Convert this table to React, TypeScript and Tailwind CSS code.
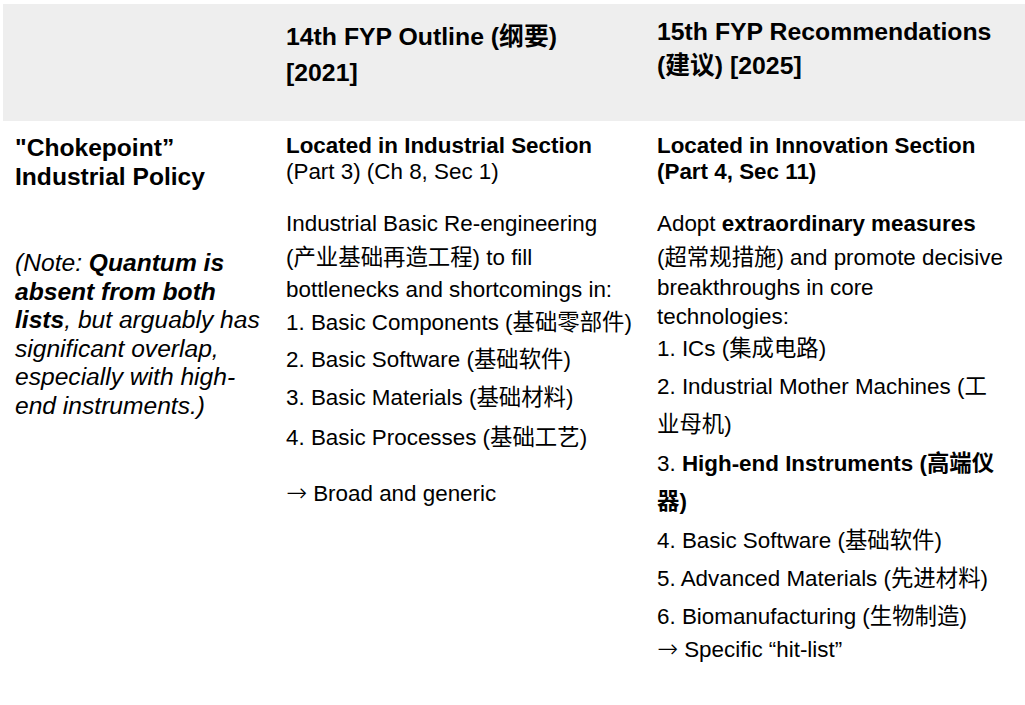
import React from 'react';

const font = { fontFamily: '"Liberation Sans", "Noto Sans CJK SC", sans-serif' };

const Line = ({ cls, children }: { cls: string; children: React.ReactNode }) => (
  <div className={`whitespace-nowrap ${cls}`}>{children}</div>
);

const Arrow = () => (
  <span className="font-['DejaVu_Sans'] text-[25px] leading-none font-light">→</span>
);

export default function App() {
  return (
    <div className="w-[1025px] h-[705px] bg-white text-black overflow-hidden" style={font}>
      <div className="pt-[4px] pl-[3px]">
        {/* header row */}
        <div className="grid grid-cols-[271px_370px_374px] h-[117px] bg-[#eeeeee] font-bold text-[24.8px]">
          <div />
          <div className="pl-3 pt-[15px] leading-[36px]">
            <Line cls="">14th FYP Outline (纲要)</Line>
            <Line cls="">[2021]</Line>
          </div>
          <div className="pl-[13px] pt-[11px] leading-[34px]">
            <Line cls="">15th FYP Recommendations</Line>
            <Line cls="">(建议) [2025]</Line>
          </div>
        </div>

        {/* body row */}
        <div className="grid grid-cols-[271px_370px_374px] pt-[12px]">
          {/* policy label */}
          <div className="pl-3 text-[24.6px]">
            <div className="font-bold leading-[29px]">
              <Line cls="">"Chokepoint”</Line>
              <Line cls="">Industrial Policy</Line>
            </div>
            <div className="italic mt-[58px] leading-[28.5px]">
              <Line cls="">(Note: <b>Quantum is</b></Line>
              <Line cls=""><b>absent from both</b></Line>
              <Line cls=""><b>lists</b>, but arguably has</Line>
              <Line cls="">significant overlap,</Line>
              <Line cls="">especially with high-</Line>
              <Line cls="">end instruments.)</Line>
            </div>
          </div>

          {/* 14th FYP */}
          <div className="pl-3 text-[22.4px]">
            <Line cls="h-[26px] leading-[26px] font-bold">Located in Industrial Section</Line>
            <Line cls="h-[26px] leading-[26px]">(Part 3) (Ch 8, Sec 1)</Line>
            <div className="mt-[22px]">
              <Line cls="h-[34px] leading-[34px]">Industrial Basic Re-engineering</Line>
              <Line cls="h-[33px] leading-[33px]">(产业基础再造工程) to fill</Line>
              <Line cls="h-[31px] leading-[31px]">bottlenecks and shortcomings in:</Line>
              <Line cls="h-[35px] leading-[35px]">1. Basic Components (基础零部件)</Line>
              <Line cls="h-[39px] leading-[39px]">2. Basic Software (基础软件)</Line>
              <Line cls="h-[38px] leading-[38px]">3. Basic Materials (基础材料)</Line>
              <Line cls="h-[41px] leading-[41px]">4. Basic Processes (基础工艺)</Line>
            </div>
            <Line cls="mt-[21px] h-[30px] leading-[30px]"><Arrow /> Broad and generic</Line>
          </div>

          {/* 15th FYP */}
          <div className="pl-[13px] text-[22.4px]">
            <div className="font-bold">
              <Line cls="h-[26px] leading-[26px]">Located in Innovation Section</Line>
              <Line cls="h-[26px] leading-[26px]">(Part 4, Sec 11)</Line>
            </div>
            <div className="mt-[22px]">
              <Line cls="h-[34px] leading-[34px]">Adopt <b>extraordinary measures</b></Line>
              <Line cls="h-[33px] leading-[33px]">(超常规措施) and promote decisive</Line>
              <Line cls="h-[28px] leading-[28px]">breakthroughs in core</Line>
              <Line cls="h-[29px] leading-[29px]">technologies:</Line>
              <Line cls="h-[36px] leading-[36px]">1. ICs (集成电路)</Line>
              <Line cls="h-[39px] leading-[39px]">2. Industrial Mother Machines (工</Line>
              <Line cls="h-[38px] leading-[38px]">业母机)</Line>
              <Line cls="h-[39px] leading-[39px]">3. <b>High-end Instruments (高端仪</b></Line>
              <Line cls="h-[38px] leading-[38px] font-bold">器)</Line>
              <Line cls="h-[39px] leading-[39px]">4. Basic Software (基础软件)</Line>
              <Line cls="h-[38px] leading-[38px]">5. Advanced Materials (先进材料)</Line>
              <Line cls="h-[38px] leading-[38px]">6. Biomanufacturing (生物制造)</Line>
              <Line cls="h-[24px] leading-[24px]"><Arrow /> Specific “hit-list”</Line>
            </div>
          </div>
        </div>
      </div>
    </div>
  );
}
